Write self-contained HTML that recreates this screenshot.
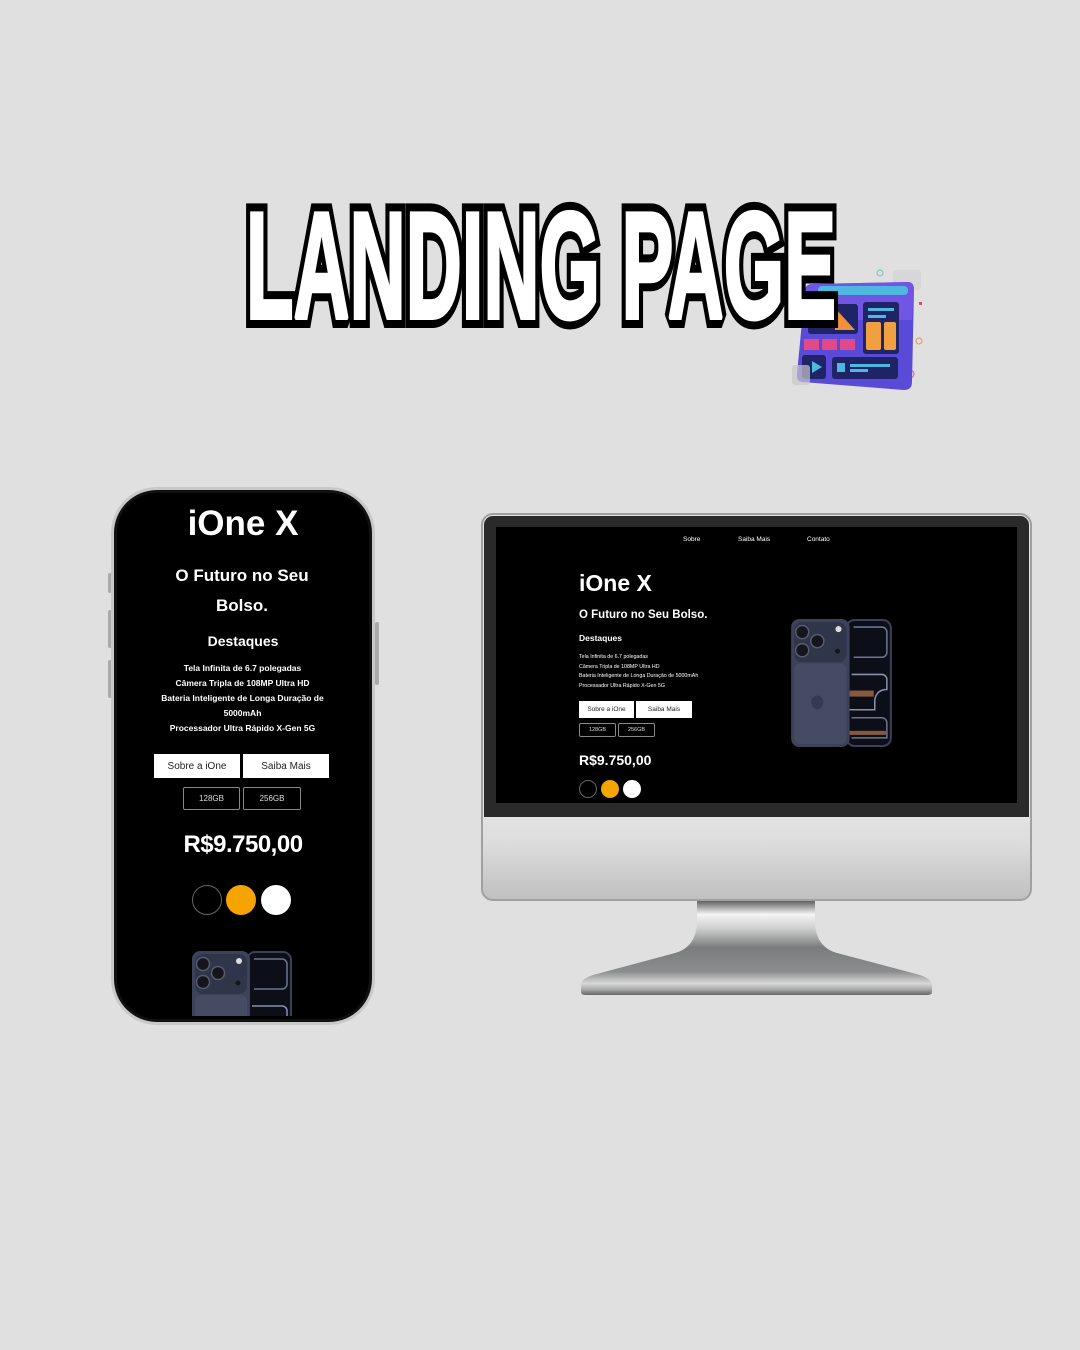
<!DOCTYPE html>
<html><head><meta charset="utf-8"><style>
*{margin:0;padding:0;box-sizing:border-box}
body{width:1080px;height:1350px;background:#e0e0e0;position:relative;overflow:hidden;font-family:"Liberation Sans",sans-serif}
.a{position:absolute}
.w{color:#fff}
.c{text-align:center}
.btn{position:absolute;background:#fff;color:#222;display:flex;align-items:center;justify-content:center}
.sb{position:absolute;border:1.5px solid #888;border-radius:2px;color:#ddd;display:flex;align-items:center;justify-content:center}
.dot{position:absolute;border-radius:50%}
</style></head><body>
<svg class="a" style="left:0;top:0" width="0" height="0">
<defs>
<symbol id="ph" viewBox="0 0 100 127">
<rect x="55" y="1" width="44" height="125" rx="8" fill="#0d0f18" stroke="#3b4058" stroke-width="2"/>
<path d="M62 8h28a5 5 0 0 1 5 5v20a5 5 0 0 1-5 5h-28" fill="none" stroke="#6b7590" stroke-width="1.5"/>
<path d="M60 55h30a5 5 0 0 1 5 5v10q-10 0-12 10v10h-25" fill="none" stroke="#8891a8" stroke-width="1.5"/>
<rect x="58" y="71" width="24" height="6" fill="#a86c48" opacity=".8"/>
<path d="M60 98h30a5 5 0 0 1 5 5v15h-35" fill="none" stroke="#6b7590" stroke-width="1.5"/>
<rect x="58" y="111" width="36" height="4" fill="#a86c48" opacity=".8"/>
<rect x="0" y="0" width="58" height="127" rx="8" fill="#3c4258"/>
<rect x="3" y="3" width="52" height="40" rx="8" fill="#30364a"/>
<rect x="3" y="44" width="52" height="80" rx="6" fill="#454b62"/>
<circle cx="11" cy="13" r="6.5" fill="#14161e" stroke="#555b70" stroke-width="1.5"/>
<circle cx="26" cy="22" r="6.5" fill="#14161e" stroke="#555b70" stroke-width="1.5"/>
<circle cx="11" cy="31" r="6.5" fill="#14161e" stroke="#555b70" stroke-width="1.5"/>
<circle cx="47" cy="10" r="3" fill="#ddd"/>
<circle cx="46" cy="32" r="2.5" fill="#14161e"/>
<path d="M26 76c-4 0-6 3-6 6 0 4 3 8 6 8s6-4 6-8c0-3-2-6-6-6z" fill="#343a50"/>
</symbol>
</defs>
</svg>

<!-- illustration -->
<svg class="a" style="left:780px;top:260px" width="150" height="140">
<rect x="113" y="10" width="28" height="20" rx="3" fill="#d4d4d8" opacity=".8"/>
<circle cx="100" cy="13" r="3" fill="none" stroke="#7bb" stroke-width="1"/>
<circle cx="139" cy="81" r="3" fill="none" stroke="#d95" stroke-width="1"/>
<circle cx="130" cy="114" r="4" fill="none" stroke="#d59" stroke-width="1"/>
<rect x="139" y="42" width="3" height="3" fill="#e46"/>
<path d="M32 24 L128 22 Q134 22 134 30 L132 122 Q132 130 124 130 L22 122 Q16 121 17 114 L25 30 Q26 24 32 24Z" fill="#5a4ad8"/>
<path d="M32 24 L128 22 Q134 22 134 30 L132 60 L20 60 L25 30 Q26 24 32 24Z" fill="#7a5ae8" opacity=".7"/>
<rect x="38" y="26" width="90" height="9" rx="4" fill="#4fb8e0"/>
<rect x="28" y="44" width="50" height="30" rx="3" fill="#1e2466"/>
<path d="M55 48 L75 70 L55 70Z" fill="#f0903a"/>
<rect x="83" y="42" width="36" height="52" rx="3" fill="#1e2466"/>
<rect x="88" y="48" width="26" height="3" fill="#4fb8e0"/>
<rect x="88" y="55" width="18" height="3" fill="#4fb8e0"/>
<rect x="86" y="62" width="15" height="28" rx="2" fill="#f0a040"/>
<rect x="104" y="62" width="12" height="28" rx="2" fill="#f0a040"/>
<rect x="24" y="79" width="15" height="11" fill="#e04a8a"/>
<rect x="42" y="79" width="15" height="11" fill="#e04a8a"/>
<rect x="60" y="79" width="15" height="11" fill="#e04a8a"/>
<rect x="22" y="95" width="24" height="24" rx="3" fill="#1e2466"/>
<path d="M32 101 L42 107 L32 113Z" fill="#4fb8e0"/>
<rect x="52" y="97" width="66" height="22" rx="3" fill="#1e2466"/>
<rect x="57" y="103" width="8" height="9" fill="#4fb8e0"/>
<rect x="70" y="104" width="40" height="3" fill="#4fb8e0"/>
<rect x="70" y="109" width="18" height="3" fill="#4fb8e0"/>
<rect x="12" y="105" width="18" height="20" rx="3" fill="#c8c8cc" opacity=".7"/>
</svg>

<!-- Title -->
<svg class="a" style="left:230px;top:185px" width="630" height="150">
<text x="16" y="133" textLength="590" lengthAdjust="spacingAndGlyphs" font-family="Liberation Sans" font-weight="bold" font-size="152" fill="#000" stroke="#000" stroke-width="20" stroke-linejoin="miter" stroke-miterlimit="1.5">LANDING PAGE</text>
<text x="16" y="133" textLength="590" lengthAdjust="spacingAndGlyphs" font-family="Liberation Sans" font-weight="bold" font-size="152" fill="#fff" stroke="#fff" stroke-width="4" stroke-linejoin="miter" stroke-miterlimit="1.5">LANDING PAGE</text>
</svg>

<!-- Phone mockup -->
<div class="a" style="left:108px;top:573px;width:4px;height:20px;background:#aaa;border-radius:2px"></div>
<div class="a" style="left:108px;top:610px;width:4px;height:38px;background:#aaa;border-radius:2px"></div>
<div class="a" style="left:108px;top:660px;width:4px;height:38px;background:#aaa;border-radius:2px"></div>
<div class="a" style="left:375px;top:622px;width:4px;height:63px;background:#aaa;border-radius:2px"></div>
<div class="a" style="left:111px;top:487px;width:264px;height:538px;border-radius:46px;background:#c8c8c8;padding:3px">
 <div style="width:100%;height:100%;border-radius:43px;background:#111;padding:3px">
  <div style="width:100%;height:100%;border-radius:40px;background:#000;position:relative;overflow:hidden"></div>
 </div>
</div>
<div class="a w c" style="left:111px;width:264px;top:503px;font-size:35px;font-weight:bold;line-height:42px">iOne X</div>
<div class="a w c" style="left:155px;width:174px;top:561px;font-size:17px;font-weight:bold;line-height:30px">O Futuro no Seu Bolso.</div>
<div class="a w c" style="left:111px;width:264px;top:632px;font-size:14px;font-weight:bold;line-height:18px">Destaques</div>
<div class="a w c" style="left:155px;width:175px;top:661px;font-size:8.5px;font-weight:bold;line-height:15px">Tela Infinita de 6.7 polegadas<br>Câmera Tripla de 108MP Ultra HD<br>Bateria Inteligente de Longa Duração de 5000mAh<br>Processador Ultra Rápido X-Gen 5G</div>
<div class="btn" style="left:154px;top:754px;width:86px;height:24px;font-size:10px">Sobre a iOne</div>
<div class="btn" style="left:243px;top:754px;width:86px;height:24px;font-size:10px">Saiba Mais</div>
<div class="sb" style="left:183px;top:787px;width:57px;height:23px;font-size:8px">128GB</div>
<div class="sb" style="left:243px;top:787px;width:58px;height:23px;font-size:8px">256GB</div>
<div class="a w c" style="left:111px;width:264px;top:830px;font-size:24px;font-weight:bold;line-height:30px;letter-spacing:-0.5px">R$9.750,00</div>
<div class="dot" style="left:192px;top:885px;width:30px;height:30px;border:1.5px solid #666;background:#000"></div>
<div class="dot" style="left:226px;top:885px;width:30px;height:30px;background:#f5a400"></div>
<div class="dot" style="left:261px;top:885px;width:30px;height:30px;background:#fff"></div>
<div class="a" style="left:192px;top:951px;width:100px;height:65px;overflow:hidden"><svg width="100" height="127"><use href="#ph"/></svg></div>

<!-- Monitor -->
<svg class="a" style="left:575px;top:895px" width="365" height="110">
<defs>
<linearGradient id="nk" x1="0" y1="0" x2="0" y2="1">
<stop offset="0" stop-color="#555"/><stop offset=".15" stop-color="#f4f4f4"/><stop offset=".3" stop-color="#cfcfcf"/><stop offset=".5" stop-color="#7a7c7d"/><stop offset=".75" stop-color="#8a8c8d"/><stop offset=".88" stop-color="#d8d8d8"/><stop offset=".94" stop-color="#aaa"/><stop offset="1" stop-color="#666"/>
</linearGradient>
</defs>
<path d="M122 5 H240 V25 Q240 52 262 58 L345 80 Q357 84 357 90 V97 Q357 100 352 100 H11 Q6 100 6 97 V90 Q6 84 18 80 L100 58 Q122 52 122 25Z" fill="url(#nk)"/>
</svg>
<div class="a" style="left:481px;top:513px;width:551px;height:388px;border-radius:12px;background:linear-gradient(#e2e2e2 79%,#dddddd 85%,#c0c0c0 100%);border:2.5px solid #a0a0a0"></div>
<div class="a" style="left:484px;top:516px;width:545px;height:301px;border-radius:9px 9px 0 0;background:#2a2a2a"></div>
<div class="a" style="left:496px;top:527px;width:521px;height:276px;background:#000"></div>
<div class="a w" style="left:683px;top:536px;font-size:6.5px">Sobre</div>
<div class="a w" style="left:738px;top:536px;font-size:6.5px">Saiba Mais</div>
<div class="a w" style="left:807px;top:536px;font-size:6.5px">Contato</div>
<div class="a w" style="left:579px;top:569px;font-size:23px;font-weight:bold;line-height:28px">iOne X</div>
<div class="a w" style="left:579px;top:608px;font-size:11.5px;font-weight:bold;line-height:14px">O Futuro no Seu Bolso.</div>
<div class="a w" style="left:579px;top:633px;font-size:8.5px;font-weight:bold;line-height:11px">Destaques</div>
<div class="a w" style="left:579px;top:653px;font-size:5.3px;line-height:9.6px">Tela Infinita de 6.7 polegadas<br>Câmera Tripla de 108MP Ultra HD<br>Bateria Inteligente de Longa Duração de 5000mAh<br>Processador Ultra Rápido X-Gen 5G</div>
<div class="btn" style="left:579px;top:701px;width:55px;height:17px;font-size:6.5px">Sobre a iOne</div>
<div class="btn" style="left:636px;top:701px;width:56px;height:17px;font-size:6.5px">Saiba Mais</div>
<div class="sb" style="left:579px;top:723px;width:37px;height:14px;font-size:5.5px">128GB</div>
<div class="sb" style="left:618px;top:723px;width:37px;height:14px;font-size:5.5px">256GB</div>
<div class="a w" style="left:579px;top:751px;font-size:14px;font-weight:bold;line-height:18px">R$9.750,00</div>
<div class="dot" style="left:579px;top:780px;width:18px;height:18px;border:1px solid #666;background:#000"></div>
<div class="dot" style="left:601px;top:780px;width:18px;height:18px;background:#f5a400"></div>
<div class="dot" style="left:623px;top:780px;width:18px;height:18px;background:#fff"></div>
<svg class="a" style="left:791px;top:619px" width="101" height="128"><use href="#ph"/></svg>
</body></html>
